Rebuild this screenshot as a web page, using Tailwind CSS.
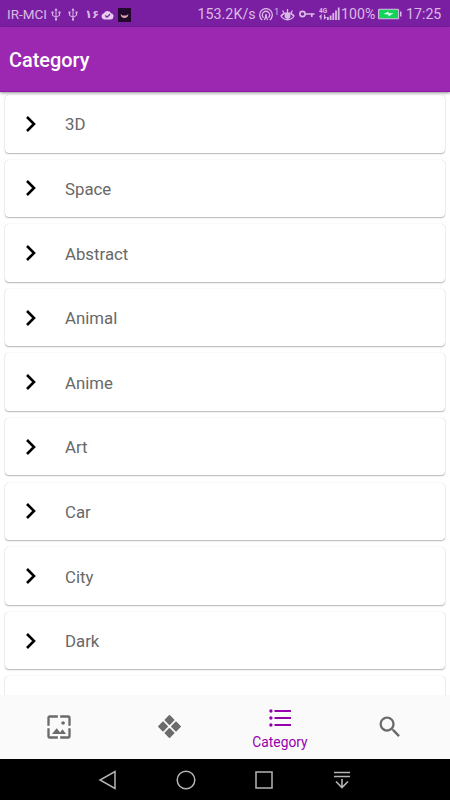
<!DOCTYPE html>
<html lang="en">
<head>
<meta charset="utf-8">
<meta name="viewport" content="width=device-width, initial-scale=1">
<title>Category</title>
<script src="https://cdn.jsdelivr.net/npm/@tailwindcss/browser@4"></script>
</head>
<body class="bg-white">
<div class="flex h-[800px] w-[450px] flex-col overflow-hidden bg-white font-[Roboto,sans-serif]">
  <div class="flex h-[27px] shrink-0 items-center bg-[#7b1fa2] pt-[2px] pl-[7px] text-[14px] leading-none text-[#d9b9e5]">
    <span class="w-[44px] whitespace-nowrap text-[13.500px]">IR-MCI</span>
    <svg class="h-[13px] w-[10px]" viewBox="0 0 10 13" fill="none" stroke="currentColor" stroke-width="1"><path d="M5 1v10M1.500 4.500v3L5 9l3.500-1.500v-3"/><path d="M3.500 2.500 5 0l1.500 2.500zM.5 3.500h2v2h-2zM7.500 3.500h2v2h-2zM4 10.500h2v2H4z" fill="currentColor" stroke="none"/></svg>
    <svg class="ml-[7px] h-[13px] w-[10px]" viewBox="0 0 10 13" fill="none" stroke="currentColor" stroke-width="1"><path d="M5 1v10M1.500 4.500v3L5 9l3.500-1.500v-3"/><path d="M3.500 2.500 5 0l1.500 2.500zM.5 3.500h2v2h-2zM7.500 3.500h2v2h-2zM4 10.500h2v2H4z" fill="currentColor" stroke="none"/></svg>
    <span class="ml-[7px] w-[16px] font-['DejaVu_Sans',sans-serif] text-[11.500px] font-bold">۱۶</span>
    <svg class="h-[10px] w-[13px]" viewBox="0 0 13 10"><path d="M3.500 9.500A3.200 3.200 0 0 1 3 3.200a3.800 3.800 0 0 1 7 0 3.200 3.200 0 0 1-.3 6.300z" fill="#e6cdee"/><path d="m4.300 5.500 1.700 1.700 3-3" fill="none" stroke="#7b1fa2" stroke-width="1.300"/></svg>
    <svg class="ml-[4px] h-[14px] w-[13px]" viewBox="0 0 13 14"><path d="M0 0h13v14H0z" fill="#23092d"/><path d="M2.500 6 4.500 7.500h4l2-1.500C10 9 8.500 10 6.500 10S3 9 2.500 6z" fill="#d8abb0"/></svg>
    <span class="ml-[66.500px] w-[61.500px] whitespace-nowrap text-[14.300px]">153.2K/s</span>
    <svg class="h-[14px] w-[14px]" viewBox="0 0 14 14" fill="none" stroke="currentColor" stroke-width="1.300"><path d="M3.300 12a6.300 6.300 0 1 1 7.400 0M4.500 9.700a3.700 3.700 0 1 1 5 0M5.500 12 7 7.500 8.500 12"/><circle cx="7" cy="7.300" r="1" fill="currentColor" stroke="none"/></svg>
    <span class="w-[7px] -translate-y-[3px] pl-px text-[9.500px]">1</span>
    <svg class="h-[14px] w-[15px]" viewBox="0 0 15 14" fill="none" stroke="currentColor" stroke-width="1.300"><path d="M1 8c3-4 10-4 13 0-3 5-10 5-13 0zM7.500 4.500V1M4 5 2.500 2.500M11 5l1.500-2.500"/><circle cx="7.500" cy="8" r="2.300" fill="currentColor"/></svg>
    <svg class="ml-[4px] h-[8px] w-[16px] -translate-y-px" viewBox="0 0 16 8" fill="none" stroke="currentColor" stroke-width="1.700"><circle cx="3.500" cy="4" r="2.600"/><path d="M6 4h9.500M12.800 4v3"/></svg>
    <div class="ml-[4px] flex w-[8px] -translate-y-px flex-col text-[6.500px] leading-[6px] font-bold"><span>4G</span>
      <svg class="h-[6px] w-[8px]" viewBox="0 0 8 6" fill="none" stroke="currentColor" stroke-width="1.200"><path d="M2 5.500v-4L.5 3M5.500.5v4L7.300 3"/></svg>
    </div>
    <svg class="h-[13px] w-[13px] -translate-y-px" viewBox="0 0 13 13" fill="currentColor"><path d="M0 10h1.800v3H0zM2.700 8.500h1.800V13H2.700zM5.400 6h1.800v7H5.400zM8.100 3.500h1.800V13H8.100zM10.800.5h1.800V13h-1.800z"/></svg>
    <span class="ml-[1px] w-[37px] whitespace-nowrap text-[14.200px]">100%</span>
    <svg class="h-[11px] w-[24px] -translate-y-[0.500px]" viewBox="0 0 24 11"><rect x=".6" y=".6" width="20" height="9.800" rx="1" fill="#13d45a" stroke="#d9b9e5" stroke-width="1.100"/><path d="M22 3h1.500v5H22z" fill="#d9b9e5"/><path d="m5.500 5.500 5-2.500v1.700H15.500L10.500 8V6z" fill="#eafff0"/></svg>
    <span class="ml-[4px] text-[14.200px]">17:25</span>
  </div>

  <header class="z-10 flex h-[64.500px] shrink-0 items-center border-b border-[#8d1ca5] bg-[#9c27b0] pl-[9px] shadow-[0_1px_3px_rgba(0,0,0,0.45)]">
    <h1 class="pt-[5px] text-[19.900px] leading-none font-medium text-white">Category</h1>
  </header>

  <main class="flex min-h-0 grow flex-col gap-[7.100px] overflow-hidden px-[5px] pt-[3.500px]" id="list"></main>

  <nav class="grid h-[64.500px] shrink-0 grid-cols-[114px_111px_110px_110px] bg-[#fafafa] text-[#6b6b6b]">
    <div class="flex items-center justify-center pl-[4px]">
      <svg class="h-[28px] w-[28px]" viewBox="0 0 24 24" fill="currentColor"><path d="M4 4h7V2H4c-1.100 0-2 .9-2 2v7h2V4zm6 9-4 5h12l-3-4-2.030 2.710L10 13zm7-4.500c0-.83-.67-1.500-1.500-1.500S14 7.670 14 8.500s.67 1.500 1.500 1.500S17 9.330 17 8.500zM20 2h-7v2h7v7h2V4c0-1.100-.9-2-2-2zm0 18h-7v2h7c1.100 0 2-.9 2-2v-7h-2v7zM4 13H2v7c0 1.100.9 2 2 2h7v-2H4v-7z"/></svg>
    </div>
    <div class="flex items-center justify-center">
      <svg class="h-[25px] w-[25px]" viewBox="0 0 24 24" fill="currentColor"><g transform="rotate(45 12 12)"><rect x="4" y="4" width="7.200" height="7.200" rx=".8"/><rect x="12.800" y="4" width="7.200" height="7.200" rx=".8"/><rect x="4" y="12.800" width="7.200" height="7.200" rx=".8"/><rect x="12.800" y="12.800" width="7.200" height="7.200" rx=".8"/></g></svg>
    </div>
    <div class="flex flex-col items-center pt-[14px] text-[#9500ad]">
      <svg class="h-[18px] w-[22px]" viewBox="0 0 22 18" fill="currentColor"><circle cx="1.900" cy="2" r="1.700"/><circle cx="1.900" cy="9" r="1.700"/><circle cx="1.900" cy="16" r="1.700"/><path d="M5.500 1H22v2H5.500zM5.500 8H22v2H5.500zM5.500 15H22v2H5.500z"/></svg>
      <span class="mt-[8px] text-[13.800px] leading-[14px]">Category</span>
    </div>
    <div class="flex items-center justify-center">
      <svg class="h-[28px] w-[28px]" viewBox="0 0 24 24" fill="currentColor"><path d="M15.500 14h-.79l-.28-.27A6.471 6.471 0 0 0 16 9.500 6.500 6.500 0 1 0 9.500 16c1.610 0 3.090-.59 4.230-1.570l.27.28v.79l5 4.990L20.490 19l-4.990-5zm-6 0C7.010 14 5 11.990 5 9.500S7.010 5 9.500 5 14 7.010 14 9.500 11.990 14 9.500 14z"/></svg>
    </div>
  </nav>

  <div class="flex h-[41px] shrink-0 items-center justify-center gap-[58px] bg-black text-[#b5b5b5]">
    <svg class="h-[20px] w-[20px]" viewBox="0 0 20 20" fill="none" stroke="currentColor" stroke-width="1.500"><path d="M17 1.500v17L2 10z"/></svg>
    <svg class="h-[20px] w-[20px]" viewBox="0 0 20 20" fill="none" stroke="currentColor" stroke-width="1.500"><circle cx="10" cy="10" r="8.800"/></svg>
    <svg class="h-[20px] w-[20px]" viewBox="0 0 20 20" fill="none" stroke="currentColor" stroke-width="1.500"><rect x="2" y="2" width="16" height="16"/></svg>
    <svg class="h-[20px] w-[20px]" viewBox="0 0 20 20" fill="none" stroke="currentColor" stroke-width="1.600"><path d="M2 2.500h16M2 6.500h16M10 9v8.500M4 11.500l6 6 6-6"/></svg>
  </div>
</div>
<script>
  const names = ["3D", "Space", "Abstract", "Animal", "Anime", "Art", "Car", "City", "Dark", ""];
  document.getElementById("list").innerHTML = names.map(name => `
    <div class="flex h-[57.500px] shrink-0 items-center rounded-[4px] bg-white pl-[20px] shadow-[0_1px_1.500px_rgba(0,0,0,0.28),0_0_1px_rgba(0,0,0,0.22)]">
      ${name ? `<svg class="h-[18px] w-[12px]" viewBox="0 0 12 18" fill="none" stroke="#000" stroke-width="2.600"><path d="m2 2 7 7-7 7"/></svg>
      <span class="ml-[28px] pt-[2px] text-[16.800px] leading-none text-[#686868]">${name}</span>` : ""}
    </div>`).join("");
</script>
</body>
</html>
